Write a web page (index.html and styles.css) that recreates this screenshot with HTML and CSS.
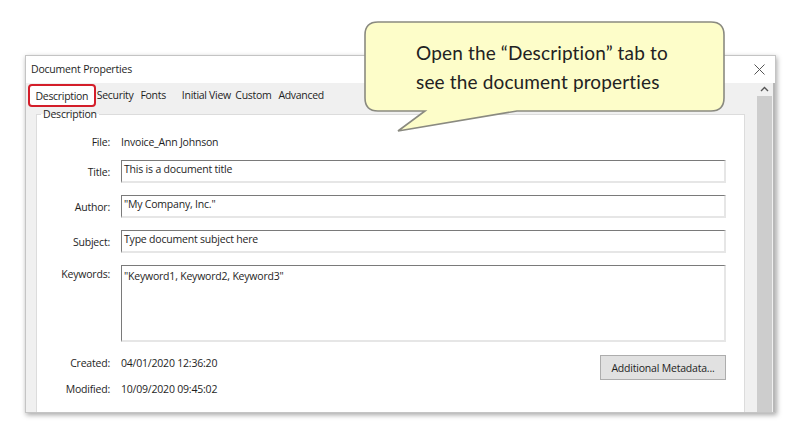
FILE: index.html
```html
<!DOCTYPE html>
<html>
<head>
  <link rel="stylesheet" href="styles.css">
</head>
<body>
  <div class="dialog">
    <div class="titlebar">
      <span class="title">Document Properties</span>
      <svg class="close" width="11" height="11" viewBox="0 0 11 11">
        <path d="M0.5 0.5 L10.5 10.5 M10.5 0.5 L0.5 10.5" stroke="#555" stroke-width="1" fill="none"/>
      </svg>
    </div>
    <div class="main">
      <div class="panel">
        <div class="tabs">
          <span class="tab active">Description</span>
          <span class="tab first">Security</span>
          <span class="tab">Fonts</span>
          <span class="tab wide">Initial View</span>
          <span class="tab narrow">Custom</span>
          <span class="tab">Advanced</span>
        </div>
        <div class="page">
          <fieldset class="group">
            <legend>Description</legend>
            <div class="row row-file">
              <span class="label">File:</span>
              <span class="value">Invoice_Ann Johnson</span>
            </div>
            <div class="row row-field">
              <span class="label">Title:</span>
              <div class="input">This is a document title</div>
            </div>
            <div class="row row-field">
              <span class="label">Author:</span>
              <div class="input">"My Company, Inc."</div>
            </div>
            <div class="row row-field">
              <span class="label">Subject:</span>
              <div class="input">Type document subject here</div>
            </div>
            <div class="row row-area">
              <span class="label">Keywords:</span>
              <div class="input textarea">"Keyword1, Keyword2, Keyword3"</div>
            </div>
            <div class="row row-created">
              <span class="label">Created:</span>
              <span class="value">04/01/2020 12:36:20</span>
              <button class="meta">Additional Metadata...</button>
            </div>
            <div class="row row-modified">
              <span class="label">Modified:</span>
              <span class="value">10/09/2020 09:45:02</span>
            </div>
          </fieldset>
        </div>
      </div>
      <div class="scrollbar">
        <svg class="arrow" width="9" height="6" viewBox="0 0 9 6">
          <path d="M1 5 L4.5 1.5 L8 5" stroke="#555" stroke-width="1.4" fill="none"/>
        </svg>
        <div class="thumb"></div>
      </div>
    </div>
  </div>

  <div class="callout">
    <svg class="bubble" width="364" height="114" viewBox="0 0 364 114">
      <path d="M14 1 H347 Q360 1 360 14 V77 Q360 90 347 90 H153 L34 110 L61 90 H14 Q1 90 1 77 V14 Q1 1 14 1 Z"
            fill="#fdfdc9" stroke="#8a8a80" stroke-width="1.6"/>
    </svg>
    <p class="callout-text">Open the “Description” tab to<br>see the document properties</p>
  </div>
</body>
</html>
```

FILE: styles.css
```css
body {
  margin: 0;
  background: #fff;
  font-family: "Open Sans", "Noto Sans", sans-serif;
  font-size: 10.5px;
  letter-spacing: -0.2px;
  color: #1e1e1e;
  width: 800px;
  height: 440px;
  overflow: hidden;
  position: relative;
}

.dialog {
  margin: 55px 0 0 25px;
  width: 749px;
  height: 356px;
  border: 1px solid #c4c4c4;
  background: #fff;
  box-shadow: 1px 2px 5px rgba(0,0,0,0.35);
  display: flex;
  flex-direction: column;
}

.titlebar {
  height: 26px;
  display: flex;
  align-items: center;
  justify-content: space-between;
  padding: 0 10px 1px 5px;
  flex-shrink: 0;
}

.main {
  flex: 1;
  display: flex;
  min-height: 0;
}

.panel {
  flex: 1;
  background: #f0f0f0;
  display: flex;
  flex-direction: column;
  padding-left: 2px;
}

.tabs {
  display: flex;
  height: 22px;
  align-items: flex-end;
  letter-spacing: -0.3px;
}

.tab {
  padding: 0 3.5px 3px 3.5px;
}

.tab.first {
  padding-left: 1px;
}

.tab.wide {
  padding-left: 12.5px;
}

.tab.narrow {
  padding-left: 1px;
}

.tab.active {
  background: #fff;
  border: 2px solid #d41e2a;
  border-radius: 4px;
  padding: 3px 5.5px 2px 5.5px;
  margin-bottom: -2px;
}

.page {
  flex: 1;
  padding: 0 11px 0 8px;
  display: flex;
}

.group {
  flex: 1;
  margin: 2px 0 0 0;
  padding: 0 18px 0 0;
  border: 1px solid #dcdcdc;
  border-bottom: none;
  background: #fff;
  min-width: 0;
}

.group legend {
  padding: 0 2px;
  margin-left: 4px;
}

.row {
  display: flex;
  align-items: center;
  gap: 11px;
}

.label {
  width: 73px;
  text-align: right;
  flex-shrink: 0;
}

.row-file {
  height: 22px;
  margin-top: 10px;
}

.row-field {
  margin-top: 12px;
}

.row-file + .row-field {
  margin-top: 7px;
}

.input {
  flex: 1;
  height: 19px;
  border: 2px solid #e6e6e6;
  border-top-color: #7a7a7a;
  border-left-color: #7a7a7a;
  border-top-width: 1px;
  border-left-width: 1px;
  padding: 1px 0 0 2px;
  line-height: 15px;
  background: #fff;
}

.row-area {
  margin-top: 12px;
  align-items: flex-start;
}

.row-area .label {
  padding-top: 2px;
}

.input.textarea {
  height: 71px;
  padding-top: 3px;
}

.row-created {
  margin-top: 12px;
  align-items: flex-start;
  height: 26px;
  line-height: 18px;
}

.meta {
  margin-left: auto;
  margin-top: 1px;
  width: 126px;
  height: 25px;
  font-family: inherit;
  font-size: 10.5px;
  letter-spacing: -0.2px;
  color: #1e1e1e;
  background: #e1e1e1;
  border: 1px solid #adadad;
}

.row-modified {
  line-height: 18px;
}

.scrollbar {
  width: 17px;
  background: #f0f0f0;
  display: flex;
  flex-direction: column;
  align-items: center;
  border-right: 2px solid #b8b8b8;
}

.arrow {
  margin-top: 3px;
}

.thumb {
  margin-top: 4px;
  width: 15px;
  flex: 1;
  background: #cdcdcd;
}

.callout {
  position: absolute;
  left: 364px;
  top: 21px;
  width: 364px;
  height: 114px;
}

.bubble {
  display: block;
}

.callout-text {
  position: absolute;
  left: 52px;
  top: 17px;
  margin: 0;
  font-family: Lato, "Open Sans", sans-serif;
  font-size: 19px;
  letter-spacing: 0.15px;
  line-height: 29px;
  color: #222;
}
```
